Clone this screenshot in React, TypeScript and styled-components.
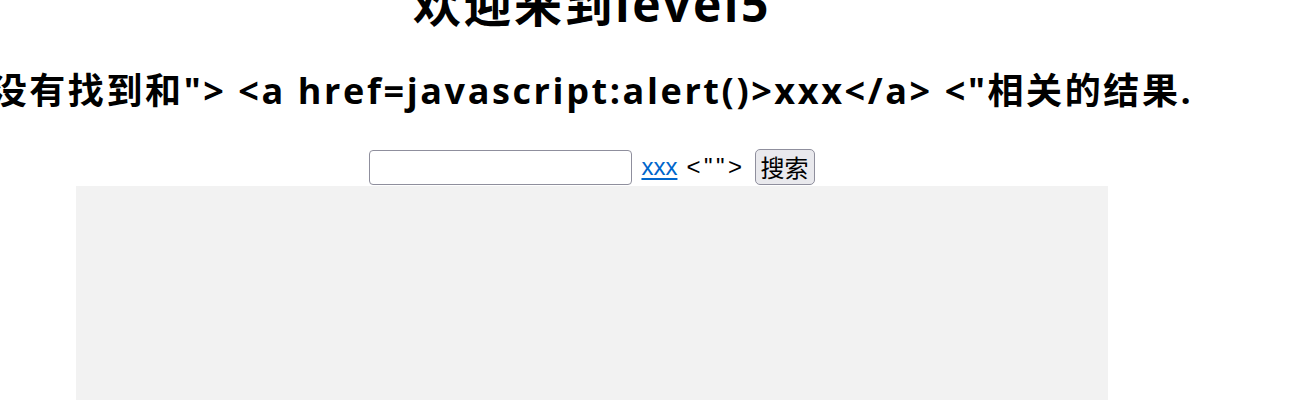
import React from 'react'
import styled, { createGlobalStyle } from 'styled-components'

const GlobalStyle = createGlobalStyle`
  html, body {
    margin: 0;
    padding: 0;
    background: #fff;
    overflow: hidden;
  }
  body {
    font-family: "Open Sans", "Noto Sans CJK SC", sans-serif;
    color: #000;
  }
`

const Page = styled.div`
  width: 1184px;
  display: flex;
  flex-direction: column;
  align-items: center;
`

const Title = styled.h1`
  margin: -25px 0 0;
  font-size: 48px;
  line-height: 58px;
  font-weight: 700;
  letter-spacing: 2.5px;
  white-space: nowrap;
`

const Message = styled.h2`
  width: 100%;
  display: flex;
  justify-content: center;
  margin: 33px 0 0;
  font-size: 36px;
  line-height: 50px;
  font-weight: 700;
  letter-spacing: 2.6px;
  white-space: nowrap;
`

const SearchForm = styled.form`
  display: flex;
  align-items: center;
  gap: 9px;
  margin-top: 33px;
  font-family: "Liberation Sans", "Noto Sans CJK SC", sans-serif;
  font-size: 24px;
`

const SearchInput = styled.input`
  width: 263px;
  height: 35px;
  box-sizing: border-box;
  border: 1.5px solid #8f8f9d;
  border-radius: 4px;
  background: #fff;
  padding: 0 4px;
`

const FakeLink = styled.a`
  color: #0066cc;
  text-decoration: underline;
  text-underline-offset: 3px;
`

const Residue = styled.span`
  letter-spacing: 3.5px;
`

const SearchButton = styled.button`
  height: 36px;
  box-sizing: border-box;
  padding: 0 5px;
  border: 1.5px solid #8f8f9d;
  border-radius: 5px;
  background: #e9e9ed;
  font-family: "Noto Sans CJK SC", sans-serif;
  font-size: 24px;
  line-height: 1;
  color: #000;
`

const Picture = styled.div`
  width: 1032px;
  height: 300px;
  margin-top: 1px;
  background: #f2f2f2;
`

export default function App() {
  return (
    <>
      <GlobalStyle />
      <Page>
        <Title>欢迎来到level5</Title>
        <Message>没有找到和"&gt; &lt;a href=javascript:alert()&gt;xxx&lt;/a&gt; &lt;"相关的结果.</Message>
        <SearchForm onSubmit={e => e.preventDefault()}>
          <SearchInput name="keyword" />
          <FakeLink href="#">xxx</FakeLink>
          <Residue>&lt;""&gt;</Residue>
          <SearchButton type="submit">搜索</SearchButton>
        </SearchForm>
        <Picture />
      </Page>
    </>
  )
}
